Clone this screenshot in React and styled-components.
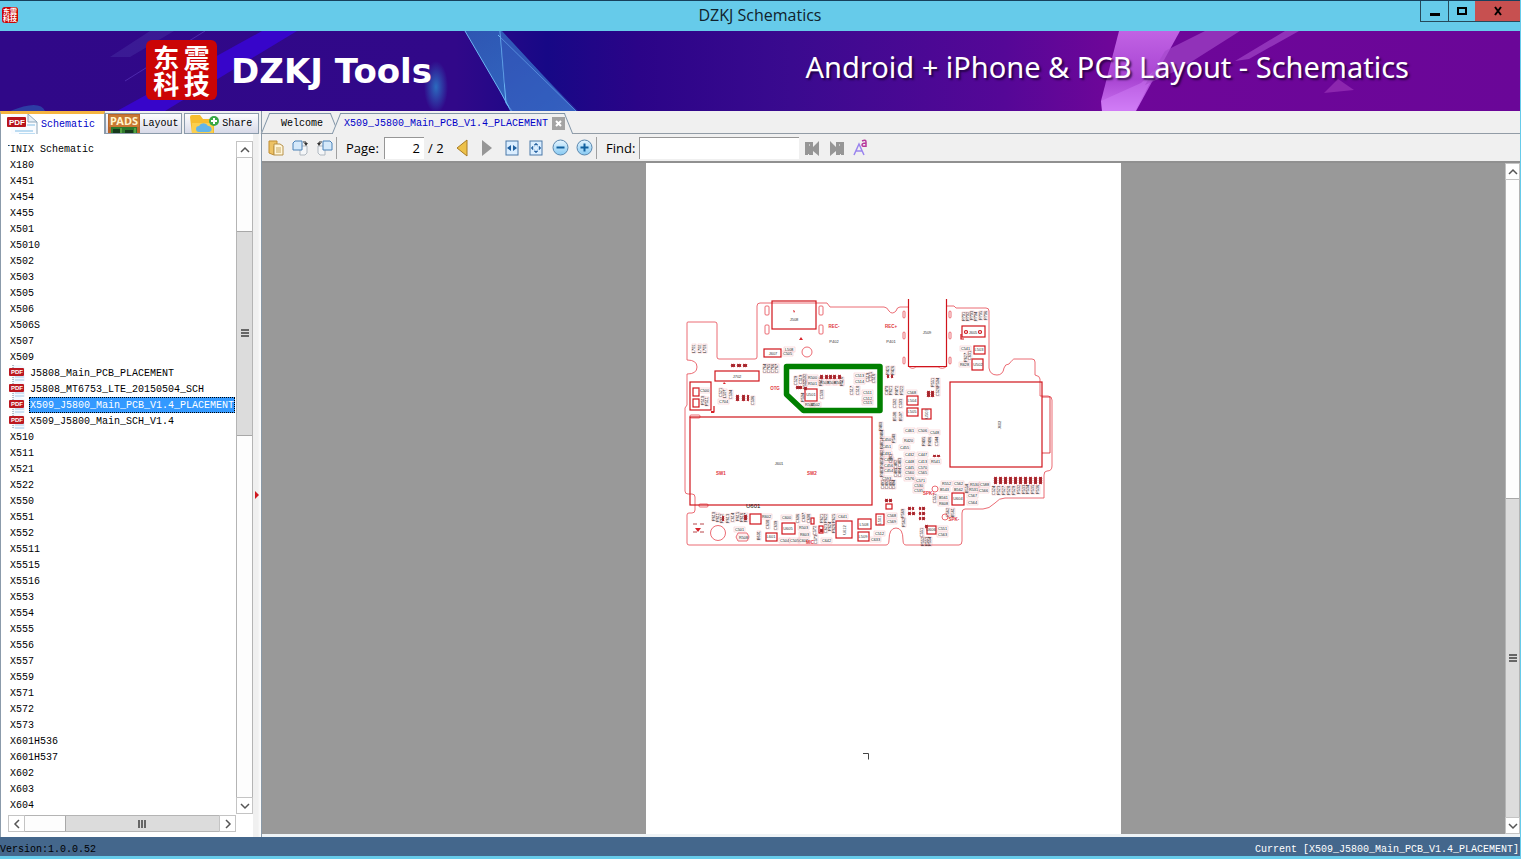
import React, { useState } from "react"
import styled, { createGlobalStyle } from "styled-components"

const mono = `"Liberation Mono", "Courier New", monospace`
const sans = `"Open Sans", "Noto Sans", sans-serif`
const han = `"Noto Sans CJK SC", sans-serif`

const GlobalStyle = createGlobalStyle`
  * {
    box-sizing: border-box;
  }
  body {
    margin: 0;
    background: #66cbea;
  }
  button, input {
    font: inherit;
    color: inherit;
    padding: 0;
    margin: 0;
    border: 0;
    border-radius: 0;
    background: none;
    outline: none;
  }
`

const Window = styled.div`
  height: 100vh;
  display: flex;
  flex-direction: column;
  background: #f0f0f0;
  border-right: 1px solid #66cbea;
  border-bottom: 3px solid #66cbea;
  font-family: ${mono};
  font-size: 10px;
  color: #000;
`

// title bar
const TitleBar = styled.header`
  height: 31px;
  flex: none;
  display: grid;
  grid-template-columns: 1fr auto 1fr;
  align-items: start;
  background: #66cbea;
  border-top: 1px solid #17405c;
`
const Title = styled.h1`
  margin: 0;
  font: 400 16px/29px ${sans};
  color: #10222c;
`
const Seal = styled.span`
  display: grid;
  grid-template-columns: repeat(2, 1fr);
  place-items: center;
  align-content: center;
  justify-content: center;
  width: ${(p) => (p.$small ? "16px" : "71px")};
  height: ${(p) => (p.$small ? "16px" : "60px")};
  margin: ${(p) => (p.$small ? "6px 0 0 2px" : "0 0 2px")};
  padding: ${(p) => (p.$small ? "0 1px" : "0 5px")};
  border-radius: ${(p) => (p.$small ? "3px" : "6px")};
  background: #cb0505;
  color: #fff;
  font: 700 ${(p) => (p.$small ? "7px/7px" : "26px/26px")} ${han};
`
const WindowButtons = styled.div`
  justify-self: end;
  display: flex;
  height: 21px;
`
const WindowButton = styled.button`
  width: ${(p) => p.$width};
  height: 21px;
  display: flex;
  align-items: center;
  justify-content: center;
  background: ${(p) => (p.$close ? "#c75050" : "transparent")};
  border-left: ${(p) => (p.$close ? "0" : "1px solid #26495a")};
  border-bottom: 1px solid #26495a;
`

// banner
const Banner = styled.div`
  position: relative;
  flex: none;
  height: 80px;
  padding: 0 111px 0 146px;
  display: flex;
  align-items: center;
  background: linear-gradient(
    90deg,
    #300888 0%,
    #310889 30%,
    #170886 36%,
    #2b0488 42%,
    #3a0a8f 52%,
    #550797 66%,
    #6e0699 73%,
    #6a0698 100%
  );
`
const BannerArt = styled.svg`
  position: absolute;
  inset: 0;
  width: 100%;
  height: 100%;
`
const Brand = styled.div`
  position: relative;
  display: flex;
  align-items: center;
  gap: 14px;
  color: #fff;
  font: 700 34px/60px "DejaVu Sans", sans-serif;
`
const Slogan = styled.p`
  position: relative;
  margin: 0 0 8px auto;
  color: #fff;
  font: 400 29px/40px "Noto Sans", sans-serif;
  text-shadow: 2px 2px 2px rgba(20, 0, 40, 0.7);
`

// body
const Body = styled.div`
  flex: 1;
  min-height: 0;
  display: flex;
`
const Sidebar = styled.aside`
  width: 262px;
  flex: none;
  display: flex;
  flex-direction: column;
  border-right: 1px solid #8a9aa8;
`
const SideTabs = styled.nav`
  height: 23px;
  flex: none;
  display: flex;
  align-items: flex-end;
`
const SideTab = styled.button`
  display: flex;
  align-items: center;
  gap: 3px;
  width: ${(p) => p.$width};
  height: ${(p) => (p.$active ? "23px" : "21px")};
  padding-left: ${(p) => (p.$active ? "6px" : "2px")};
  overflow: hidden;
  color: ${(p) => (p.$active ? "#0000c8" : "#000")};
  background: ${(p) =>
    p.$active ? "#fff" : "linear-gradient(#fdfdfe, #d8dae8)"};
  border: 1px solid #8b9bab;
  border-top: ${(p) => (p.$active ? "3px solid #f5b440" : "1px solid #8b9bab")};
  border-bottom: ${(p) => (p.$active ? "0" : "1px solid #8b9bab")};
  margin-right: ${(p) => (p.$active ? "0" : "2px")};
`
const SideBody = styled.div`
  flex: 1;
  min-height: 0;
  display: flex;
  background: #fff;
  border-left: 1px solid #8b9bab;
`
const TreePane = styled.div`
  flex: 1;
  min-width: 0;
  padding: 7px 0 5px 7px;
  display: grid;
  grid-template-columns: 1fr 17px;
  grid-template-rows: 1fr 18px;
`
const Splitter = styled.div`
  width: 8px;
  padding-top: 18px;
  display: flex;
  align-items: center;
  justify-content: center;
  background: linear-gradient(90deg, #f0f0f0 60%, #fff);
`
const Tree = styled.ul`
  margin: 0;
  padding: 0;
  min-height: 0;
  overflow: hidden;
  list-style: none;
`
const TreeRow = styled.li`
  display: flex;
  height: 16px;
  margin-left: ${(p) => ["-4px", "2px", "1px"][p.$level]};
`
const TreeButton = styled.button`
  display: flex;
  align-items: center;
  gap: 4px;
  line-height: 18px;
  white-space: pre;
`
const TreeLabel = styled.span`
  height: 16px;
  padding-left: ${(p) => (p.$file ? "1px" : "0")};
  padding-right: 1px;
  color: ${(p) => (p.$selected ? "#fff" : "#000")};
  background: ${(p) => (p.$selected ? "#3399ff" : "transparent")};
  outline: ${(p) => (p.$selected ? "1px dotted #000" : "none")};
  outline-offset: -1px;
`

// scroll bars
const ScrollBar = styled.div`
  display: flex;
  flex-direction: ${(p) => (p.$across ? "row" : "column")};
  width: ${(p) => (p.$across ? "auto" : p.$width)};
  height: ${(p) => (p.$across ? "17px" : "auto")};
  align-self: ${(p) => (p.$across ? "end" : "stretch")};
  flex: none;
  background: #fdfdfd;
  border: 1px solid #b4b4b4;
`
const ScrollArrow = styled.button`
  flex: none;
  width: ${(p) => (p.$across ? "15px" : "100%")};
  height: ${(p) => (p.$across ? "100%" : "15px")};
  display: flex;
  align-items: center;
  justify-content: center;
  background: #fff;
  box-shadow: 0 0 0 1px #c4c4c4;
`
const ScrollGap = styled.div`
  flex: ${(p) => p.$part};
`
const ScrollThumb = styled.div`
  flex: ${(p) => p.$part};
  display: flex;
  align-items: center;
  justify-content: center;
  background: #dcdcdc;
  border: 0 solid #a8a8a8;
  border-width: ${(p) => (p.$across ? "0 1px" : "1px 0")};
`

// document side
const Main = styled.main`
  flex: 1;
  min-width: 0;
  display: flex;
  flex-direction: column;
`
const DocTabs = styled.nav`
  height: 23px;
  flex: none;
  display: flex;
  align-items: flex-end;
  padding-left: 3px;
  border-bottom: 1px solid #929ca6;
`
const DocTab = styled.div`
  position: relative;
  height: 21px;
  margin-bottom: -1px;
  margin-right: 1px;
  display: flex;
  align-items: center;
  gap: 3px;
  padding: ${(p) => (p.$active ? "0 4px 0 8px" : "0 12px 0 16px")};
  color: ${(p) => (p.$active ? "#0000c8" : "#000")};

  &::before,
  &::after {
    content: "";
    position: absolute;
    top: 0;
    bottom: 0;
    background: #f0f0f0;
    border-top: 1px solid #7f93a6;
    border-bottom: ${(p) => (p.$active ? "0" : "1px solid #929ca6")};
  }
  &::before {
    left: 0;
    right: 40%;
    transform: skewX(-22deg);
    border-left: 1px solid #7f93a6;
  }
  &::after {
    left: 40%;
    right: 0;
    transform: skewX(22deg);
    border-right: 1px solid #7f93a6;
  }
  & > * {
    position: relative;
    z-index: 1;
  }
`
const CloseTab = styled.button`
  width: 13px;
  height: 13px;
  margin-left: 1px;
  display: flex;
  align-items: center;
  justify-content: center;
  background: #a3a3a3;
`
const Toolbar = styled.div`
  flex: none;
  height: 29px;
  display: flex;
  align-items: center;
  padding-left: 2px;
  border-bottom: 2px solid #909090;
  font: 400 13px/20px ${sans};
`
const Tool = styled.button`
  width: ${(p) => p.$width || "24px"};
  height: 24px;
  display: flex;
  align-items: center;
  justify-content: center;
`
const Separator = styled.span`
  width: 1px;
  height: 22px;
  margin-right: 9px;
  background: #a0a0a0;
`
const Label = styled.label`
  width: ${(p) => p.$width};
`
const Field = styled.input`
  width: ${(p) => p.$width};
  height: 22px;
  padding: 0 4px;
  text-align: ${(p) => p.$align || "left"};
  background: #fff;
  border-top: 1px solid #969696;
  border-left: 1px solid #969696;
`
const PageCount = styled.span`
  margin-left: 4px;
  width: 22px;
  white-space: nowrap;
`
const Viewer = styled.div`
  flex: 1;
  min-height: 0;
  display: flex;
  background: #999;
  border-bottom: 3px solid #eef3f6;
`
const Canvas = styled.div`
  flex: 1;
  min-width: 0;
  overflow: hidden;
  display: flex;
  justify-content: center;
`
const Sheet = styled.div`
  width: 475px;
  min-height: 100%;
  background: #fff;
`
const StatusBar = styled.footer`
  flex: none;
  height: 19px;
  padding: 3px 1px 0 0;
  display: flex;
  justify-content: space-between;
  background: #44678c;
  line-height: 20px;
  white-space: pre;
`
const Current = styled.span`
  color: #fff;
`

const Chevron = ({ turn = 0 }) => (
  <svg width="10" height="10" viewBox="0 0 10 10">
    <path
      d="M1 7 5 3l4 4"
      fill="none"
      stroke="#555"
      strokeWidth="1.5"
      transform={`rotate(${turn} 5 5)`}
    />
  </svg>
)

const Grip = ({ across }) => (
  <svg width="8" height="8" viewBox="0 0 8 8">
    <path
      d="M0 1h8M0 4h8M0 7h8"
      stroke="#666"
      strokeWidth="2"
      transform={across ? "rotate(90 4 4)" : undefined}
    />
  </svg>
)

const PdfIcon = ({ large }) => (
  <svg
    width={large ? 31 : 16}
    height={large ? 20 : 16}
    viewBox={large ? "0 0 31 20" : "0 0 16 16"}
  >
    {large ? (
      <>
        <path d="M4 0h17l9 8v12H4z" fill="#fafcff" />
        <path d="M21 0v8h9z" fill="#e4eef6" stroke="#8fa8bc" />
        <path d="M30 8v12" stroke="#8fa8bc" />
        <path d="M8 17h18M12 20h16M20 11h8" stroke="#bcdcf2" strokeWidth="2" />
        <rect x="0" y="3" width="19" height="10" rx="1" fill="#b8141c" />
        <text x="2" y="11" fontSize="8" fontWeight="700" fill="#fff" fontFamily="Liberation Sans">
          PDF
        </text>
      </>
    ) : (
      <>
        <path d="M4 0h8l4 3v13H4z" fill="#f2f8fe" />
        <path d="M4 0v3M4 12v4" stroke="#6c7f90" strokeDasharray="1 1" />
        <path d="M6 12h9M6 15h9" stroke="#a8cbe8" />
        <rect x="0" y="3" width="15" height="8" rx="1" fill="#bc1820" />
        <text x="2" y="9" fontSize="6" fontWeight="700" fill="#fff" fontFamily="Liberation Sans">
          PDF
        </text>
      </>
    )}
  </svg>
)

const PadsIcon = () => (
  <svg width="32" height="20" viewBox="0 0 32 20">
    <rect x="0" y="0" width="32" height="20" fill="#b8642a" />
    <rect x="1" y="1" width="30" height="12" fill="#c87832" />
    <text x="2" y="11" fontSize="11" fontWeight="700" fill="#fff4cc" fontFamily="Noto Sans">
      PADS
    </text>
    <rect x="3" y="13" width="26" height="7" fill="#2d7a2c" />
    <path d="M5 15h7v5H5zM17 16h8v4h-8z" fill="#173a1c" />
    <path d="M13 14v6M27 14v6" stroke="#7cc85a" />
  </svg>
)

const ShareIcon = () => (
  <svg width="32" height="20" viewBox="0 0 32 20">
    <path d="M3 3q0-2 2-2h8l3 4h9q2 0 2 2v13H5z" fill="#f6bd2e" />
    <path d="M5 9h21v11H5z" fill="#fbcf4d" />
    <path d="M12 18a3 3 0 0 1 0-6 5 5 0 0 1 9 0 3 3 0 0 1 1 6z" fill="#63b5e8" />
    <circle cx="27" cy="7" r="5" fill="#39a845" />
    <path d="M27 4v6M24 7h6" stroke="#fff" strokeWidth="2" />
  </svg>
)

const OpenIcon = () => (
  <svg width="16" height="16" viewBox="0 0 16 16">
    <path d="M1 1h8v3l-3 2v9l-5-2z" fill="#edc264" stroke="#c08d33" />
    <path d="M6 4h6l3 2v9H6z" fill="#fff6da" stroke="#b7924b" />
    <path d="M8 8h5M8 10h5M8 12h5" stroke="#c8a860" />
  </svg>
)

const RotateIcon = ({ flip }) => (
  <svg width="17" height="16" viewBox="0 0 17 16">
    <g transform={flip ? "matrix(-1 0 0 1 17 0)" : undefined}>
      <path d="M8 6h7v7l-2 2H8z" fill="#f4f6f8" stroke="#b0b8c0" />
      <path d="M3 1h7v9H1V3z" fill="#d5e9fa" stroke="#4b82b8" />
      <path d="M11 2h3v2" fill="none" stroke="#333" />
      <path d="M12 3h4l-2 3z" fill="#333" />
    </g>
  </svg>
)

const ZoomIcon = ({ plus }) => (
  <svg width="17" height="17" viewBox="0 0 17 17">
    <defs>
      <linearGradient id="zoomFill" x1="0" y1="0" x2="0" y2="1">
        <stop offset="0" stopColor="#e6f5ff" />
        <stop offset="1" stopColor="#86c9f2" />
      </linearGradient>
    </defs>
    <circle cx="8.5" cy="8.5" r="7.5" fill="url(#zoomFill)" stroke="#5a87ae" />
    <path d={plus ? "M4.5 8.5h8M8.5 4.5v8" : "M4.5 8.5h8"} stroke="#11609f" strokeWidth="2" />
  </svg>
)

const FitIcon = ({ page }) => (
  <svg width="14" height="16" viewBox="0 0 14 16">
    <rect x="1" y="1" width="12" height="14" fill="#dbeeff" stroke="#4a78a8" />
    {page ? (
      <path d="M7 3l2 2H5zM7 13l2-2H5zM2 8l2-2v4zM12 8l-2-2v4zM5 6h1M8 6h1M5 10h1M8 10h1" fill="#2c66a4" stroke="#2c66a4" strokeWidth=".4" />
    ) : (
      <path d="M2 8l4-3v6zM12 8 8 5v6z" fill="#1f5f9f" />
    )}
  </svg>
)

const ArrowIcon = ({ next }) => (
  <svg width="14" height="18" viewBox="0 0 14 18">
    {next ? (
      <path d="M2 1v16l10-8z" fill="#969696" />
    ) : (
      <path d="M12 1v16L2 9z" fill="#edc14a" stroke="#a87b22" />
    )}
  </svg>
)

const FindIcon = ({ next }) => (
  <svg width="16" height="16" viewBox="0 0 16 16">
    <g transform={next ? "matrix(-1 0 0 1 16 0)" : undefined} fill="#969696">
      <path d="M1 2h8v5l6-6v15l-6-5v4H5v-1H4v1H1z" />
      <path d="M5 4h1v2H5z" fill="#c8c8c8" />
    </g>
  </svg>
)

const MatchCaseIcon = () => (
  <svg width="16" height="17" viewBox="0 0 16 17">
    <path d="M1 16 6 5l5 11M3 12h6" fill="none" stroke="#9a84ee" strokeWidth="1.5" />
    <path d="M9 2q4-2 4 1v5M13 4q-4 0-4 2t4 1" fill="none" stroke="#b8389c" strokeWidth="1.5" />
  </svg>
)

const BannerDrawing = () => (
  <BannerArt viewBox="0 0 1520 80" preserveAspectRatio="none">
    <defs>
      <linearGradient id="shard" x1="0" y1="0" x2="1" y2="1">
        <stop offset="0" stopColor="#2f6fc0" />
        <stop offset="1" stopColor="#3c90dc" />
      </linearGradient>
      <linearGradient id="pinkShard" x1="0" y1="0" x2="0" y2="1">
        <stop offset="0" stopColor="#c163e4" />
        <stop offset=".6" stopColor="#a844d2" />
        <stop offset="1" stopColor="#cc74f2" />
      </linearGradient>
      <radialGradient id="glow">
        <stop offset="0" stopColor="#2a84cc" />
        <stop offset="1" stopColor="#2a84cc" stopOpacity="0" />
      </radialGradient>
    </defs>
    <path d="M262 0h35L165 80h-48z" fill="#3904e0" opacity=".75" />
    <path d="M150 0h24l-44 26h-20z" fill="#4b36a8" opacity=".4" />
    <path d="M205 0 125 50" stroke="#6a4ad0" opacity=".5" />
    <path d="M10 80q30-12 35 0z" fill="#2a70c0" opacity=".5" />
    <ellipse cx="436" cy="56" rx="12" ry="26" fill="url(#glow)" opacity=".8" />
    <path d="M465 0h37l74 80h-66l-10-20z" fill="url(#shard)" opacity=".75" />
    <path d="M465 0l35 60 11 20M500 0l6 72 6 8M498 4l78 76" fill="none" stroke="#6db8f4" />
    <path d="M500 0l78 80h-68l-6-30z" fill="#3550b8" opacity=".45" />
    <path d="M1119 0h61l-44 80h-34l-1-10z" fill="url(#pinkShard)" />
    <path d="M1101 70l40-18 18-17-24 45h-33z" fill="#d98cff" opacity=".35" />
    <path d="M1205 0h35l-60 38-35 16 20-34zM1285 0h14l-50 28-14 2z" fill="#a54acb" opacity=".65" />
    <path d="M1338 48l16 11-30 3z" fill="#9a34b8" opacity=".7" />
  </BannerArt>
)

// board placement data, x / y / width / height
const blocks = [
  [690, 417, 182, 88], [950, 382, 92, 85], [772, 301, 44, 28], [690, 382, 21, 28],
  [715, 371, 44, 10], [764, 349, 17, 8], [805, 389, 12, 12], [962, 326, 23, 11],
  [974, 346, 11, 8], [972, 359, 11, 11], [907, 396, 11, 9], [907, 408, 11, 8],
  [922, 409, 9, 10], [952, 493, 12, 12], [876, 514, 8, 11], [858, 519, 13, 10],
  [858, 532, 11, 9], [836, 521, 16, 17], [782, 523, 13, 11], [766, 533, 11, 8],
  [750, 514, 11, 10], [927, 526, 9, 8], [693, 388, 6, 8], [693, 399, 6, 8],
  [811, 518, 3, 6], [819, 526, 4, 7], [886, 504, 6, 5],
]
const slots = [
  [765, 306, 4, 9], [765, 325, 4, 9], [819, 306, 4, 9], [819, 325, 4, 9],
  [903, 311, 2, 7], [903, 332, 2, 7], [903, 357, 2, 7],
  [949, 311, 2, 7], [949, 332, 2, 7], [949, 357, 2, 7], [690, 415, 10, 3], [699, 504, 9, 3],
]
// small parts with their designators
const flatParts = [
  ["L508", 785, 349], ["C505", 783, 353], ["C500", 700, 390], ["C704", 719, 401],
  ["R500", 808, 377], ["R501", 808, 383], ["C513", 855, 375], ["C514", 855, 381],
  ["C511", 863, 392], ["C512", 863, 398], ["C515", 863, 402], ["R502", 805, 404], ["B502", 811, 404],
  ["R503", 820, 382], ["R506", 827, 382], ["R507", 834, 382],
  ["R602", 762, 516], ["C600", 782, 517], ["C641", 838, 516], ["C504", 780, 540],
  ["C505", 790, 540], ["C602", 799, 540], ["C642", 822, 540], ["R503", 799, 527],
  ["R603", 800, 534], ["C501", 735, 529], ["R508", 739, 537],
  ["C450", 882, 439], ["C451", 882, 446], ["C431", 882, 453], ["C453", 884, 459],
  ["C456", 884, 465], ["C454", 884, 470], ["C461", 905, 430], ["C506", 918, 430],
  ["C548", 930, 432], ["R420", 904, 440], ["C455", 900, 447],
  ["C432", 905, 454], ["C447", 918, 454], ["C448", 905, 461], ["C413", 918, 461],
  ["C445", 905, 467], ["C570", 918, 467], ["C560", 905, 472], ["C565", 918, 472],
  ["C576", 905, 478], ["C571", 916, 480], ["C530", 914, 485], ["C535", 914, 490],
  ["R541", 931, 461], ["C593", 882, 478], ["C568", 907, 392],
  ["R552", 942, 483], ["C562", 954, 483], ["R530", 970, 484], ["C588", 980, 484],
  ["B543", 940, 489], ["B562", 954, 489], ["R531", 969, 489], ["C566", 979, 490],
  ["B561", 939, 497], ["R608", 939, 503], ["C567", 968, 495], ["C564", 968, 502],
  ["C568", 887, 515], ["C569", 887, 521], ["C633", 871, 539], ["C512", 875, 533],
  ["C563", 938, 534], ["C551", 938, 528], ["C541", 961, 348], ["R628", 960, 364],
]
const tallParts = [
  ["L701", 692, 344], ["L702", 698, 344], ["L703", 703, 344], ["C521", 719, 388],
  ["L507", 723, 389], ["C504", 729, 390], ["C506", 751, 396], ["R510", 701, 396], ["R511", 705, 397],
  ["C529", 794, 376], ["C519", 799, 375], ["C502", 803, 374], ["R512", 803, 380],
  ["C515", 869, 372], ["C516", 872, 374], ["C517", 850, 386], ["C518", 856, 386], ["C519", 866, 373],
  ["C530", 820, 390], ["R504", 801, 393], ["R515", 819, 377], ["R516", 840, 377],
  ["R425", 886, 366], ["R426", 891, 366], ["C470", 885, 386], ["R621", 889, 386],
  ["R472", 895, 386], ["R522", 900, 386], ["C502", 893, 399], ["C503", 899, 399],
  ["B508", 893, 412], ["B507", 899, 412], ["R551", 931, 378], ["R504", 936, 378],
  ["C526", 936, 387], ["R405", 922, 437], ["R406", 928, 437], ["C544", 935, 437],
  ["R540", 892, 434], ["R480", 879, 422], ["R484", 880, 430], ["R481", 880, 440], ["R482", 880, 450],
  ["R485", 880, 459], ["R483", 880, 468],
  ["C481", 889, 454], ["C482", 894, 460], ["C483", 898, 458], ["C484", 898, 468], ["C485", 894, 468],
  ["C491", 881, 480], ["C492", 885, 480], ["C493", 889, 480], ["C494", 892, 480],
  ["R610", 712, 512], ["R611", 716, 513], ["R612", 720, 514], ["R613", 726, 514],
  ["C614", 731, 513], ["R615", 736, 512], ["R616", 740, 513], ["R617", 744, 513],
  ["B601", 757, 531], ["C638", 766, 520], ["C639", 774, 521], ["C606", 796, 514],
  ["C607", 802, 513], ["C608", 807, 514], ["R621", 820, 514], ["R622", 824, 514],
  ["C623", 824, 524], ["R624", 828, 522], ["R625", 832, 514], ["R626", 832, 524],
  ["C572", 813, 526], ["C573", 814, 535],
  ["R701", 962, 312], ["R702", 966, 312], ["R703", 970, 311], ["R704", 974, 312],
  ["R705", 979, 311], ["R706", 984, 311], ["R627", 964, 353], ["C631", 968, 351],
  ["C551", 933, 494], ["B554", 965, 484], ["C562", 946, 508], ["B561", 951, 508],
  ["C551", 920, 528], ["R552", 921, 537], ["R553", 925, 537], ["R554", 928, 537],
  ["C524", 992, 486], ["R523", 997, 486], ["R527", 1002, 486], ["R528", 1007, 486],
  ["R529", 1012, 486], ["R532", 1017, 485], ["R533", 1022, 485], ["R534", 1026, 485],
  ["R535", 1031, 485], ["R536", 1036, 485], ["C764", 763, 364], ["C765", 767, 364],
  ["C766", 771, 364], ["C767", 775, 364], ["R569", 901, 509], ["R562", 902, 518],
]
// dense red pads
const pads = [
  [731, 364, 4, 3], [737, 364, 4, 3], [743, 364, 4, 3], [736, 395, 3, 6], [742, 395, 3, 6], [747, 395, 2, 6],
  [820, 375, 3, 4], [825, 375, 3, 4], [829, 375, 3, 4], [833, 375, 3, 4], [838, 375, 3, 4],
  [796, 386, 6, 3], [804, 387, 3, 3], [887, 375, 2, 3], [891, 375, 2, 3], [927, 391, 3, 6], [931, 391, 3, 6],
  [933, 455, 3, 2], [937, 455, 3, 2], [885, 499, 3, 3], [889, 499, 3, 3],
  [908, 507, 3, 3], [912, 507, 2, 3], [908, 512, 3, 3], [912, 512, 3, 3], [919, 507, 2, 3], [922, 507, 3, 3],
  [919, 512, 2, 3], [922, 512, 3, 3], [919, 517, 2, 3], [922, 517, 3, 3],
  [722, 516, 2, 5], [744, 515, 3, 5], [820, 529, 3, 3], [925, 525, 3, 3],
  ...Array.from({ length: 10 }, (_, i) => [994 + i * 5, 477, 3, 7]),
]
const notes = [
  ["J508", 794, 321], ["J509", 927, 334], ["J601", 779, 465], ["J702", 737, 378], ["P402", 834, 343],
  ["P401", 891, 343], ["J607", 773, 355], ["U501", 811, 396], ["J605", 973, 334], ["L503", 979, 351],
  ["U502", 978, 366], ["L504", 912, 402], ["L505", 912, 413], ["U604", 958, 500], ["U605", 788, 530],
  ["L508", 864, 526], ["L509", 863, 538], ["L601", 771, 538], ["U606", 931, 531],
]
const redNotes = [
  ["REC-", 834, 328], ["REC+", 891, 328], ["OTG", 775, 390], ["SW1", 721, 475], ["SW2", 812, 475],
  ["SPK+", 929, 495], ["SPK-", 954, 521], ["MIC", 810, 544],
]

const outline =
  "M689 545q-2 0-2-2v-28q0-2 2-2h3q3 0 3-3v-13q0-3-3-3h-4q-3 0-3-3v-83l2-3v-31q10 0 10-7t-10-7v-37q0-1 1-1h27q2 0 2 2v33q0 2 2 2h36q2 0 2-2v-51q0-3 3-3h67l3 4h54q3 0 5 4 3 4 7 0 1-4 4-4h8M947 306h7l2 2h30q3 0 3 3v57q1 7 8 7 6 0 7-7 1-4 5-4 4-5 5-5h18q3 0 3 3v13q5 1 5 4v17h8q4 0 4 4v66q0 5-5 5-3 0-3 4v23h-39q-6 0-10 5-6 6-12 6h-18q-3 0-3 4v28q0 4-3 4h-53q-3 0-3-5 0-12-7-12t-7 12q0 5-3 5H689"

const Board = () => (
  <svg width="475" height="670" viewBox="646 163 475 670" fontFamily="Liberation Sans">
    <g fill="none" stroke="#e64650" strokeWidth=".8">
      <path d={outline} />
      <path d="M1042 397h8v56h-8" stroke="#d41c24" />
      {slots.map(([x, y, w, h]) => (
        <rect key={`${x}-${y}`} x={x} y={y} width={w} height={h} rx="1" />
      ))}
      <circle cx="807" cy="352" r="5" />
      <circle cx="718" cy="533" r="7.5" />
      <circle cx="935" cy="489" r="3" />
      <circle cx="945" cy="517" r="3" />
      <path d="M908 366q4 4 8 1h22q5 3 9-1M738 533h9l2 4-2 4h-9l-2-4z" />
    </g>
    <g fill="none" stroke="#d0141c" strokeWidth="1.2">
      {blocks.map(([x, y, w, h]) => (
        <rect key={`${x}-${y}`} x={x} y={y} width={w} height={h} />
      ))}
      <path d="M908.5 299v67.5h38V299M711 412h3v-6M961 334v5h3" />
      <circle cx="966" cy="332" r="1.5" />
      <circle cx="980" cy="332" r="1.5" />
    </g>
    <g stroke="#ee969c" strokeWidth=".3" fontSize="3.8">
      {flatParts.map(([name, x, y], i) => (
        <g key={i}>
          <rect x={x - 1} y={y - 2} width="11" height="5" fill="none" />
          <text x={x} y={y + 2} fill="#111" stroke="none">{name}</text>
        </g>
      ))}
      {tallParts.map(([name, x, y], i) => (
        <g key={i}>
          <rect x={x} y={y} width="4" height="9" fill="none" />
          <text transform={`translate(${x + 3} ${y + 9}) rotate(-90)`} fill="#111" stroke="none">{name}</text>
        </g>
      ))}
    </g>
    <g fill="#a3262c">
      {pads.map(([x, y, w, h]) => (
        <rect key={`${x}-${y}`} x={x} y={y} width={w} height={h} stroke="#e2565c" strokeWidth=".5" strokeDasharray="1 1" />
      ))}
      <path d="M799 340l2-3 2 3zM723 384l1-2 2 2zM695 528l3 4 3-4zM711 411h3v2h-3zM793 310l2 1-1 2z" fill="#d8222a" />
      <path d="M693 524h4M700 524h4M693 532h4M700 532h4" stroke="#b8464a" />
    </g>
    <g fontSize="4" fill="#333" textAnchor="middle">
      {notes.map(([name, x, y]) => (
        <text key={name + x} x={x} y={y}>{name}</text>
      ))}
      <text transform="translate(1001 425) rotate(-90)">J602</text>
      <text transform="translate(846 530) rotate(-90)">U612</text>
      <text transform="translate(928 414) rotate(-90)">U503</text>
      <text transform="translate(881 520) rotate(-90)">L501</text>
    </g>
    <g fontSize="4.5" fontWeight="700" fill="#e0353c" textAnchor="middle">
      {redNotes.map(([name, x, y]) => (
        <text key={name} x={x} y={y}>{name}</text>
      ))}
    </g>
    <text x="746" y="508" fontSize="6" fill="#111">U601</text>
    <path d="M786.5 366.5h93.5v44h-76.5l-17-16z" fill="none" stroke="#008000" strokeWidth="5.5" strokeLinejoin="round" />
    <path d="M863 753.5h5.5v6" fill="none" stroke="#444" />
  </svg>
)

const folders = (names) => names.map((name) => ({ name, level: 1 }))
const files = (names) => names.map((name) => ({ name, level: 2 }))
const tree = [
  { name: "TINIX Schematic", level: 0 },
  ...folders(["X180", "X451", "X454", "X455", "X501", "X5010", "X502", "X503", "X505", "X506", "X506S", "X507", "X509"]),
  ...files(["J5808_Main_PCB_PLACEMENT", "J5808_MT6753_LTE_20150504_SCH", "X509_J5800_Main_PCB_V1.4_PLACEMENT", "X509_J5800_Main_SCH_V1.4"]),
  ...folders([
    "X510", "X511", "X521", "X522", "X550", "X551", "X552", "X5511", "X5515", "X5516", "X553", "X554",
    "X555", "X556", "X557", "X559", "X571", "X572", "X573", "X601H536", "X601H537", "X602", "X603", "X604",
  ]),
]

const App = () => {
  const [current, setCurrent] = useState("X509_J5800_Main_PCB_V1.4_PLACEMENT")
  const [page, setPage] = useState("2")
  const [find, setFind] = useState("")

  const handleSelect = (item) => {
    if (item.level === 2) setCurrent(item.name)
  }

  return (
    <Window>
      <GlobalStyle />
      <TitleBar>
        <Seal $small>
          <span>东</span>
          <span>震</span>
          <span>科</span>
          <span>技</span>
        </Seal>
        <Title>DZKJ Schematics</Title>
        <WindowButtons>
          <WindowButton $width="28px" aria-label="Minimize">
            <svg width="12" height="12"><path d="M1 8h10v3H1z" /></svg>
          </WindowButton>
          <WindowButton $width="27px" aria-label="Maximize">
            <svg width="12" height="12"><path d="M2 3h8v6H2z" fill="none" stroke="#000" strokeWidth="2" /></svg>
          </WindowButton>
          <WindowButton $width="45px" $close aria-label="Close">
            <svg width="12" height="12"><path d="M3 2l6 8M9 2l-6 8" stroke="#000" strokeWidth="2" /></svg>
          </WindowButton>
        </WindowButtons>
      </TitleBar>

      <Banner>
        <BannerDrawing />
        <Brand>
          <Seal>
            <span>东</span>
            <span>震</span>
            <span>科</span>
            <span>技</span>
          </Seal>
          DZKJ Tools
        </Brand>
        <Slogan>Android + iPhone &amp; PCB Layout - Schematics</Slogan>
      </Banner>

      <Body>
        <Sidebar>
          <SideTabs>
            <SideTab $active $width="105px">
              <PdfIcon large />
              Schematic
            </SideTab>
            <SideTab $width="78px">
              <PadsIcon />
              Layout
            </SideTab>
            <SideTab $width="75px">
              <ShareIcon />
              Share
            </SideTab>
          </SideTabs>
          <SideBody>
            <TreePane>
              <Tree>
                {tree.map((item) => (
                  <TreeRow key={item.name} $level={item.level}>
                    <TreeButton onClick={() => handleSelect(item)}>
                      {item.level === 2 && <PdfIcon />}
                      <TreeLabel $file={item.level === 2} $selected={item.name === current}>
                        {item.name}
                      </TreeLabel>
                    </TreeButton>
                  </TreeRow>
                ))}
              </Tree>
              <ScrollBar $width="17px">
                <ScrollArrow aria-label="Up"><Chevron /></ScrollArrow>
                <ScrollGap $part={74} />
                <ScrollThumb $part={204}><Grip /></ScrollThumb>
                <ScrollGap $part={363} />
                <ScrollArrow aria-label="Down"><Chevron turn={180} /></ScrollArrow>
              </ScrollBar>
              <ScrollBar $across>
                <ScrollArrow $across aria-label="Left"><Chevron turn={-90} /></ScrollArrow>
                <ScrollGap $part={41} />
                <ScrollThumb $across $part={154}><Grip across /></ScrollThumb>
                <ScrollArrow $across aria-label="Right"><Chevron turn={90} /></ScrollArrow>
              </ScrollBar>
            </TreePane>
            <Splitter>
              <svg width="6" height="10"><path d="M1 1l4 4-4 4z" fill="#d01820" /></svg>
            </Splitter>
          </SideBody>
        </Sidebar>

        <Main>
          <DocTabs>
            <DocTab>
              <button>Welcome</button>
            </DocTab>
            <DocTab $active>
              <button>{current}</button>
              <CloseTab aria-label="Close tab">
                <svg width="7" height="7"><path d="M1 1l5 5M6 1 1 6" stroke="#fff" strokeWidth="2" /></svg>
              </CloseTab>
            </DocTab>
          </DocTabs>
          <Toolbar>
            <Tool aria-label="Open"><OpenIcon /></Tool>
            <Tool aria-label="Rotate right"><RotateIcon /></Tool>
            <Tool aria-label="Rotate left"><RotateIcon flip /></Tool>
            <Separator />
            <Label htmlFor="page" $width="38px">Page:</Label>
            <Field id="page" $width="40px" $align="right" value={page} onChange={(e) => setPage(e.target.value)} />
            <PageCount>/ 2</PageCount>
            <Tool aria-label="Previous page"><ArrowIcon /></Tool>
            <Tool $width="26px" aria-label="Next page"><ArrowIcon next /></Tool>
            <Tool aria-label="Fit width"><FitIcon /></Tool>
            <Tool aria-label="Fit page"><FitIcon page /></Tool>
            <Tool aria-label="Zoom out"><ZoomIcon /></Tool>
            <Tool aria-label="Zoom in"><ZoomIcon plus /></Tool>
            <Separator />
            <Label htmlFor="find" $width="33px">Find:</Label>
            <Field id="find" $width="160px" value={find} onChange={(e) => setFind(e.target.value)} />
            <Tool $width="26px" aria-label="Find previous"><FindIcon /></Tool>
            <Tool aria-label="Find next"><FindIcon next /></Tool>
            <Tool aria-label="Match case"><MatchCaseIcon /></Tool>
          </Toolbar>
          <Viewer>
            <Canvas>
              <Sheet>
                <Board />
              </Sheet>
            </Canvas>
            <ScrollBar $width="15px">
              <ScrollArrow aria-label="Page up"><Chevron /></ScrollArrow>
              <ScrollGap $part={321} />
              <ScrollThumb $part={321}><Grip /></ScrollThumb>
              <ScrollArrow aria-label="Page down"><Chevron turn={180} /></ScrollArrow>
            </ScrollBar>
          </Viewer>
        </Main>
      </Body>

      <StatusBar>
        <span>Version:1.0.0.52</span>
        <Current>Current [{current}]</Current>
      </StatusBar>
    </Window>
  )
}

export default App
